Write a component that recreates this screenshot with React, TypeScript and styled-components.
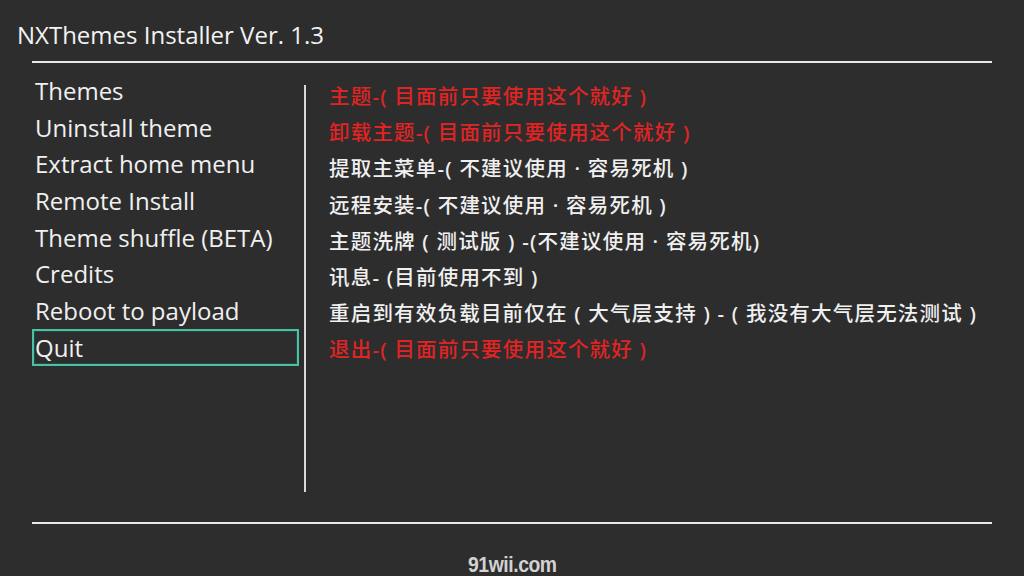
import React from "react";
import styled, { createGlobalStyle } from "styled-components";

const GlobalStyle = createGlobalStyle`
  html, body {
    margin: 0;
    padding: 0;
    background: #2d2d2d;
  }
  body {
    font-family: "Open Sans", "Noto Sans", "Noto Sans CJK SC", sans-serif;
  }
`;

interface MenuEntry {
  id: number;
  label: string;
  note: string;
  warn: boolean;
}

const entries: MenuEntry[] = [
  { id: 1, label: "Themes", note: "主题-( 目面前只要使用这个就好 )", warn: true },
  { id: 2, label: "Uninstall theme", note: "卸载主题-( 目面前只要使用这个就好 )", warn: true },
  { id: 3, label: "Extract home menu", note: "提取主菜单-( 不建议使用 · 容易死机 )", warn: false },
  { id: 4, label: "Remote Install", note: "远程安装-( 不建议使用 · 容易死机 )", warn: false },
  { id: 5, label: "Theme shuffle (BETA)", note: "主题洗牌 ( 测试版 ) -(不建议使用 · 容易死机)", warn: false },
  { id: 6, label: "Credits", note: "讯息- (目前使用不到 )", warn: false },
  { id: 7, label: "Reboot to payload", note: "重启到有效负载目前仅在 ( 大气层支持 ) - ( 我没有大气层无法测试 )", warn: false },
  { id: 8, label: "Quit", note: "退出-( 目面前只要使用这个就好 )", warn: true },
];

const selectedId = 8;

const App: React.FC = () => {
  return (
    <>
      <GlobalStyle />
      <Screen>
        <Title>NXThemes Installer Ver. 1.3</Title>
        <Rule />
        <Body>
          <MenuList>
            {entries.map((e) => (
              <MenuItem key={e.id} $selected={e.id === selectedId}>
                {e.label}
              </MenuItem>
            ))}
          </MenuList>
          <Divider />
          <NoteList>
            {entries.map((e) => (
              <Note key={e.id} $warn={e.warn}>
                {e.note}
              </Note>
            ))}
          </NoteList>
        </Body>
        <Rule />
        <Footer>
          <Watermark>91wii.com</Watermark>
        </Footer>
      </Screen>
    </>
  );
};

export default App;

const Screen = styled.div`
  width: 1024px;
  height: 576px;
  background: #2d2d2d;
  display: flex;
  flex-direction: column;
  overflow: hidden;
`;

const Title = styled.div`
  height: 61px;
  padding-left: 17px;
  padding-top: 8px;
  box-sizing: border-box;
  display: flex;
  align-items: center;
  font-size: 24px;
  color: #f2f2f2;
`;

const Rule = styled.div`
  margin: 0 32px;
  height: 2px;
  background: #e8e8e8;
  flex-shrink: 0;
`;

const Body = styled.div`
  height: 459px;
  display: flex;
  padding: 9px 0 0 32px;
  box-sizing: border-box;
`;

const MenuList = styled.div`
  width: 267px;
  display: flex;
  flex-direction: column;
`;

const MenuItem = styled.div<{ $selected: boolean }>`
  height: 36.7px;
  box-sizing: border-box;
  padding-left: 1px;
  display: flex;
  align-items: center;
  font-size: 24px;
  color: #f0f0f0;
  border: 2px solid ${(p) => (p.$selected ? "#4cc0a4" : "transparent")};
  box-shadow: ${(p) => (p.$selected ? "inset 0 0 0 1px #1f4a40" : "none")};
`;

const Divider = styled.div`
  width: 2px;
  margin: 13px 0 30px 5px;
  background: #d8d8d8;
`;

const NoteList = styled.div`
  display: flex;
  flex-direction: column;
  padding: 5px 0 0 23px;
`;

const Note = styled.div<{ $warn: boolean }>`
  height: 36.2px;
  display: flex;
  align-items: center;
  font-family: "Noto Sans", "Noto Sans CJK SC", sans-serif;
  font-size: 20.5px;
  font-weight: 500;
  letter-spacing: 1.2px;
  white-space: nowrap;
  color: ${(p) => (p.$warn ? "#e02424" : "#f0f0f0")};
`;

const Footer = styled.div`
  flex: 1;
  display: flex;
  align-items: flex-end;
  justify-content: center;
`;

const Watermark = styled.div`
  font-family: "Liberation Sans", sans-serif;
  font-weight: bold;
  font-size: 22px;
  line-height: 22px;
  color: #d2d2d2;
  letter-spacing: -0.5px;
  transform: scaleX(0.88);
`;
